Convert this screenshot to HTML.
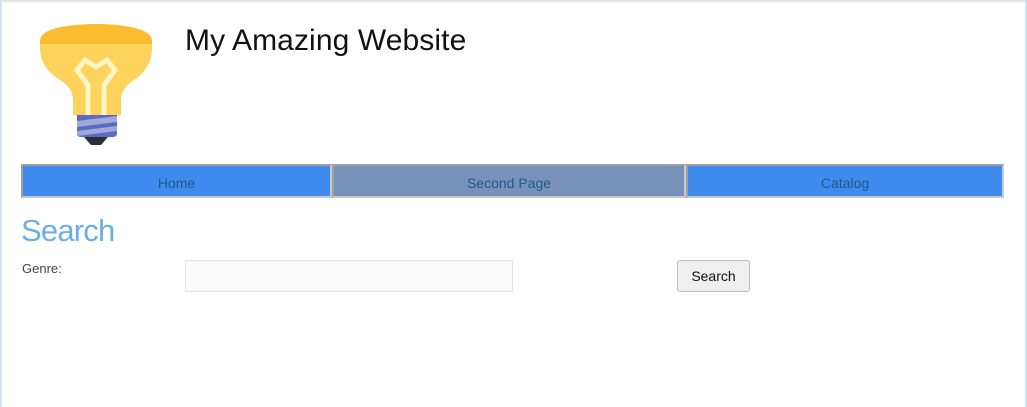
<!DOCTYPE html>
<html><head><meta charset="utf-8"><style>
html,body{margin:0;padding:0;width:1027px;height:407px;overflow:hidden;background:#fff;font-family:"Liberation Sans",sans-serif}
.frame{position:absolute;left:0;top:0;width:1027px;height:407px;box-sizing:border-box;border-left:2px solid #d4e2ee;border-right:2px solid #d4e2ee}
.topsh{position:absolute;left:0;top:0;width:1027px;height:4px;background:linear-gradient(#dcdcdc,#fff)}
.title{position:absolute;left:185px;top:24px;font-size:30px;font-weight:300;color:#111;letter-spacing:0.1px;white-space:nowrap}
.nav{position:absolute;left:21px;top:164px;height:34px}
.cell{position:absolute;top:0;height:34px;box-sizing:border-box;border:2px solid #a0a0a0;border-right-color:#c8c8c8;border-bottom-color:#c8c8c8;text-align:center;line-height:35px;font-size:14px;color:#1e5b8c}
.sec{position:absolute;left:21px;top:213px;font-size:31px;font-weight:300;color:#6aaee4;letter-spacing:-0.8px}
.lbl{position:absolute;left:22px;top:261px;font-size:13px;color:#444}
.inp{position:absolute;left:185px;top:260px;width:328px;height:32px;box-sizing:border-box;border:1px solid #e2e2e2;background:#fafafa;border-radius:2px}
.btn{position:absolute;left:677px;top:260px;width:73px;height:32px;box-sizing:border-box;border:1px solid #bdbdbd;background:#efefef;border-radius:3px;font-size:14px;color:#111;text-align:center;line-height:30px}
</style></head><body>
<div class="topsh"></div>
<div class="frame"></div>
<svg style="position:absolute;left:38px;top:20px" width="118" height="130" viewBox="38 20 118 130">
<path d="M40 40 Q42 25 96 24 Q150 25 152 40 L152 48 Q152 68 134 80 Q121 88 121 100 L121 115 L73 115 L73 100 Q73 88 60 80 Q40 68 40 48 Z" fill="#fdd35b"/>
<path d="M40 40 Q42 25 96 24 Q150 25 152 40 L152 44 L40 44 Z" fill="#fbbd2f"/>
<path d="M88 115 L88 85 L77 70 L85 60 L96 67 L107 60 L115 70 L104 85 L104 115" fill="none" stroke="#fff4c4" stroke-width="5" stroke-linejoin="round"/>
<path d="M77 115 L117 115 L117 133 Q117 137 113 137 L81 137 Q77 137 77 133 Z" fill="#5c6bc0"/>
<path d="M77 121 L117 116 L117 122 L77 127 Z M77 131 L117 126 L117 131 L77 136Z" fill="#9fa8da"/>
<path d="M84 137 L108 137 L101 145 L91 145 Z" fill="#263238"/>
</svg>
<div class="title">My Amazing Website</div>
<div class="nav">
<div class="cell" style="left:0;width:311px;background:#3e8aed">Home</div>
<div class="cell" style="left:311px;width:354px;background:#7891b9">Second Page</div>
<div class="cell" style="left:665px;width:318px;background:#3e8aed">Catalog</div>
</div>
<div class="sec">Search</div>
<div class="lbl">Genre:</div>
<div class="inp"></div>
<div class="btn">Search</div>
</body></html>
